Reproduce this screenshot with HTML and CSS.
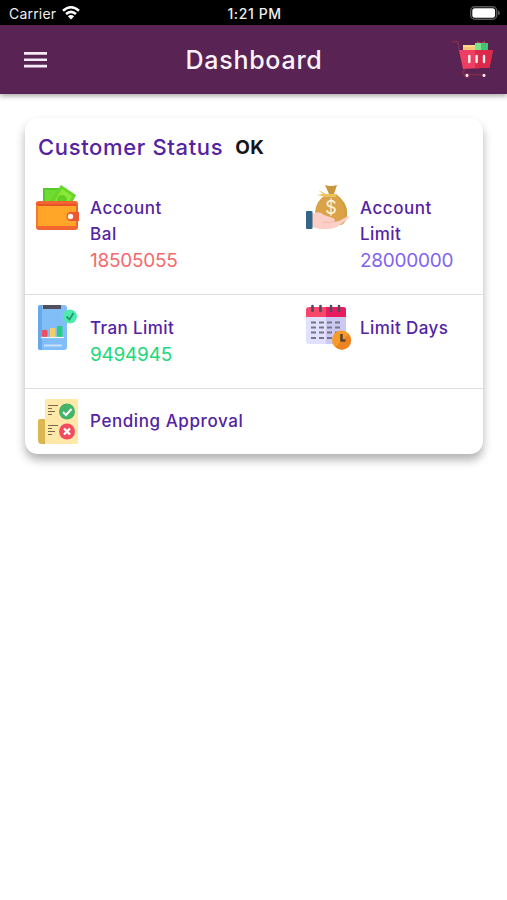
FILE: index.html
```html
<!DOCTYPE html>
<html lang="en">
<head>
<meta charset="utf-8">
<title>Dashboard</title>
<link rel="stylesheet" href="styles.css">
</head>
<body>
<div class="status-bar">
  <div class="carrier"><span>Carrier</span>
    <svg width="18" height="14" viewBox="0 0 18 14" fill="none" stroke="#fff" stroke-width="2.5"><path d="M1 4.8Q9-2.2 17 4.8M4 8Q9 3.7 14 8"/><path d="M9 13.5 5.8 10.2Q9 7.7 12.2 10.2Z" fill="#fff" stroke="none"/></svg>
  </div>
  <span class="clock">1:21 PM</span>
  <svg class="battery" width="30" height="14" viewBox="0 0 30 14"><rect x=".7" y=".7" width="26" height="12.6" rx="4" fill="none" stroke="#59595b" stroke-width="1.4"/><rect x="2.3" y="2.3" width="22.8" height="9.4" rx="2.5" fill="#fff"/><path d="M28 4.5q2 .8 2 2.5t-2 2.5z" fill="#59595b"/></svg>
</div>
<header class="app-bar">
  <svg class="menu" width="23" height="16" viewBox="0 0 23 16" fill="#f4e9f5"><path d="M0 0h23v2.7H0zM0 6.4h23v2.7H0zM0 12.8h23v2.7H0z"/></svg>
  <h1>Dashboard</h1>
  <svg class="cart" width="43" height="40" viewBox="0 0 43 40">
    <path d="M1 1.7h5.5l7 29-2 1.5 1.5 2.5h21" fill="none" stroke="#7b2d49" stroke-width="1.8"/>
    <path d="M12 5h13v7H12z" fill="#f8c678"/><path d="M12 5h13v2H12z" fill="#ffd890"/>
    <path d="M24 3h13v9H24z" fill="#46c373"/><path d="M24 3h6v9h-6z" fill="#78e48b"/><path d="M26 1l4 2 4-2v2h-8z" fill="#d33451"/>
    <path d="M8 10h34l-3.5 17.5L12 29z" fill="#ee3e61"/><path d="M24 10h18l-3.5 17.5L24 28.4z" fill="#dc2949"/>
    <path d="M18.3 16v6M25.6 16v6M33 16v6" stroke="#fff3f4" stroke-width="2.4" stroke-linecap="round"/>
    <circle cx="16" cy="35.5" r="2.7" fill="#8c304b"/><circle cx="33" cy="35.5" r="2" fill="#8c304b"/><circle cx="16" cy="35.5" r="1.4" fill="#fff"/><circle cx="33" cy="35.5" r="1.4" fill="#fff"/>
  </svg>
</header>
<main class="card">
  <div class="card-head"><h2>Customer Status</h2><strong>OK</strong></div>
  <section class="row row-balance">
    <div class="item">
      <svg class="icon" width="46" height="46" viewBox="0 0 46 46">
        <path d="M7 3h18v18H7z" fill="#55c928"/><path d="M9 5h14v14H9z" fill="#70db32"/>
        <path d="M13 17 25 0 40 10 34 22H13z" fill="#68d729"/><path d="M18 17 26 4 36 11 31 21H18z" fill="#8be83a"/><circle cx="26" cy="15" r="5" fill="#62ce24"/>
        <rect x="0" y="16" width="42" height="29" rx="3" fill="#f26631"/><path d="M0 20h40v21H0z" fill="#ffa527"/><path d="M0 17q1 2 4 2h36v2H3q-3 0-3-4z" fill="#e95227"/>
        <path d="M1 20v21" stroke="#f27b29" stroke-width="2"/><path d="M35 27h8v9h-8a4.5 4.5 0 0 1 0-9z" fill="#ed5634"/><circle cx="34.5" cy="31.5" r="2.7" fill="#fff5e9"/>
      </svg>
      <div class="text"><h3><span class="w-account">Account</span><br><span class="w-bal">Bal</span></h3><p class="red">18505055</p></div>
    </div>
    <div class="item">
      <svg class="icon" width="46" height="46" viewBox="0 0 46 46">
        <path d="M19 0q6 2 12 0l-3 9h-5z" fill="#c8963d"/><path d="M21 9h9q11 8 11 19 0 9-6 12H16q-7-2-7-12 0-12 12-19z" fill="#daa347"/><path d="M31 11q8 8 8 17 0 9-4 12l2-1q4-4 4-11 0-10-10-17z" fill="#d09c40"/>
        <path d="M30 9H20l-8-4 5 4-6 1 9 2h10z" fill="#ecc35d"/><text x="25" y="29" text-anchor="middle" class="coin">$</text>
        <path d="M6 29q7-4 12 1l9 3q3 1 1 4l5-1 9-5q2 1 0 3l-11 8q-8 3-17 2L6 42z" fill="#fbcfc5"/><path d="M17 37q7 2 12-1" fill="none" stroke="#efbfb4"/><rect x="0" y="26" width="6.5" height="18" rx="1" fill="#326587"/>
      </svg>
      <div class="text"><h3><span class="w-account">Account</span><br><span class="w-limit">Limit</span></h3><p class="violet">28000000</p></div>
    </div>
  </section>
  <section class="row row-limits">
    <div class="item">
      <svg class="icon" width="46" height="46" viewBox="0 0 46 46">
        <rect x="2" y="1" width="29" height="45" rx="3" fill="#81bdf7"/><path d="M4 1h2v45H4q-2 0-2-2V3q0-2 2-2z" fill="#66a8ec"/><path d="M7 1h18v4H7z" fill="#514f5b"/>
        <rect x="6" y="26" width="5.5" height="7" rx="1" fill="#ef4d60"/><rect x="14" y="24" width="5.5" height="9" rx="1" fill="#f4cd66"/><rect x="21" y="22" width="5.5" height="11" rx="1" fill="#27ce82"/><path d="M5 33.5h23" stroke="#f2f8ff" stroke-width="1.2"/><path d="M8 41.5h18" stroke="#c7e2fc" stroke-width="2"/>
        <circle cx="34" cy="12.5" r="7" fill="#50ebaa"/><path d="m30.5 12.5 3 3 4-6.5" fill="none" stroke="#1d9c75" stroke-width="1.8"/>
      </svg>
      <div class="text"><h3 class="w-tran">Tran Limit</h3><p class="green">9494945</p></div>
    </div>
    <div class="item">
      <svg class="icon" width="46" height="46" viewBox="0 0 46 46">
        <rect y="4" width="40" height="36" rx="3" fill="#e1e1ff"/><path d="M20 12h20v25q0 3-3 3H20z" fill="#cbc9f2"/><path d="M0 13V6q0-3 3-3h34q3 0 3 3v7z" fill="#fa466b"/><path d="M20 3h17q3 0 3 3v7H20z" fill="#e91c60"/>
        <path d="M6.5 2v5M14.5 2v5M25 2v5M33 2v5" stroke="#524a61" stroke-width="2.6" stroke-linecap="round"/>
        <path d="M5 18.5h31M5 23.5h31M5 28.5h31M5 34h22" stroke="#777486" stroke-width="2" stroke-dasharray="5 3"/>
        <circle cx="35.5" cy="36" r="9.5" fill="#f99b29"/><path d="M42.5 30a9 9 0 0 1-13 13z" fill="#ed8424"/><path d="M35.5 30v6.5h4" fill="none" stroke="#584435" stroke-width="2.6"/>
      </svg>
      <div class="text"><h3 class="w-days">Limit Days</h3></div>
    </div>
  </section>
  <section class="row row-approval">
    <div class="item">
      <svg class="icon" width="46" height="46" viewBox="0 0 46 46">
        <rect x="9" y="1" width="33" height="45" rx="2" fill="#ffe8a8"/><path d="M2 23q0-2 2-2h5v21q0 4-4 4-3 0-3-4z" fill="#dcb650"/><path d="M9 40v6H5q4 0 4-6z" fill="#d2a743"/>
        <path d="M12 7.5h10M12 10.5h4M12 13.5h7M12 16.5h4M12 27.5h10M12 30.5h4M12 33.5h7M12 36.5h4" stroke="#76694c" stroke-width="1.2"/>
        <circle cx="31" cy="13.5" r="8" fill="#43b468"/><path d="m27 14 3 3 5.5-6" fill="none" stroke="#fff" stroke-width="2"/><circle cx="31" cy="33.5" r="8" fill="#f34c60"/><path d="m28 30.5 6 6m0-6-6 6" stroke="#fff" stroke-width="2.4"/>
      </svg>
      <div class="text"><h3 class="w-pending">Pending Approval</h3></div>
    </div>
  </section>
</main>
</body>
</html>
```
FILE: styles.css
```css
* { box-sizing: border-box; }
body { margin: 0; min-height: 900px; background: #fff; font-family: Inter, sans-serif; }
h1, h2, h3, p { margin: 0; font-weight: 500; white-space: nowrap; }
svg { display: block; flex: none; }
.status-bar { height: 25px; background: #000; color: #eee; display: grid; grid-template-columns: 1fr auto 1fr; align-items: center; padding: 1px 7px 0 9px; font-size: 14px; }
.carrier { display: flex; align-items: center; gap: 6px; letter-spacing: .2px; }
.clock { font-weight: 500; font-size: 14px; letter-spacing: .6px; }
.battery { justify-self: end; }
.app-bar { height: 69px; background: #592353; display: grid; grid-template-columns: 1fr auto 1fr; align-items: center; padding: 0 13px 0 24px; box-shadow: 0 2px 5px rgba(0,0,0,.35); }
.app-bar h1 { color: #fbf3fb; font-size: 25px; line-height: 36px; letter-spacing: .75px; margin-right: 10px; }
.cart { justify-self: end; }
.card { width: 458px; height: 336px; margin: 24px 0 0 25px; background: #fff; border-radius: 13px; box-shadow: 0 6px 10px rgba(0,0,0,.3); }
.card-head { height: 61px; padding: 0 0 3px 13px; display: flex; align-items: center; gap: 12px; }
.card-head h2 { font-size: 22px; letter-spacing: .65px; color: #5423a3; font-weight: 450; }
.card-head strong { font-size: 19px; color: #171519; letter-spacing: .3px; }
.row { display: grid; grid-template-columns: 270px 1fr; padding-left: 11px; }
.row + .row { border-top: 1px solid #dedede; }
.row-balance { height: 115px; padding-top: 6px; }
.row-limits { height: 94px; padding-top: 9px; }
.row-approval { height: 66px; padding-top: 9px; }
.item { display: flex; gap: 8px; }
.text { padding-top: 10px; }
.text h3 { color: #5423a3; font-size: 17px; line-height: 26px; }
.text p { font-size: 19px; line-height: 28px; font-weight: 400; letter-spacing: -.25px; }
.w-account { letter-spacing: .55px; }
.w-bal { letter-spacing: .6px; }
.w-limit { letter-spacing: .4px; }
.w-tran { letter-spacing: .4px; }
.w-days { letter-spacing: .4px; }
.w-pending { letter-spacing: .58px; }
.row-limits h3 { padding-top: 1px; }
.red { color: #f46a6d; }
.violet { color: #8064ed; }
.green { color: #20d879; }
.coin { fill: #fff6db; font: 18px Inter, sans-serif; }
```
